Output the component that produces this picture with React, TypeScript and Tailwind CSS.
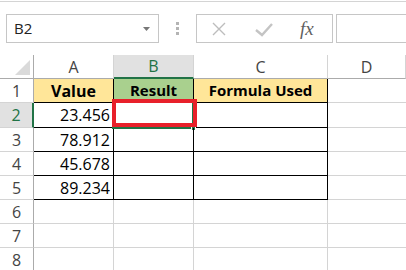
import React from 'react';

const font = { fontFamily: '"Open Sans", "Liberation Sans", sans-serif' };

type Row = { n: number; a: string; h: string };

const rows: Row[] = [
  { n: 1, a: 'Value', h: 'h-[24px]' },
  { n: 2, a: '23.456', h: 'h-[25px]' },
  { n: 3, a: '78.912', h: 'h-[24px]' },
  { n: 4, a: '45.678', h: 'h-[24px]' },
  { n: 5, a: '89.234', h: 'h-[24px]' },
  { n: 6, a: '', h: 'h-[24px]' },
  { n: 7, a: '', h: 'h-[24px]' },
  { n: 8, a: '', h: 'h-[24px]' },
];

function FormulaBar() {
  return (
    <div className="flex items-center h-[29px] mt-[12px]">
      <div className="ml-[6px] w-[153px] h-full border border-[#c6c6c6] flex items-center justify-between pl-[7px] pr-[8px]">
        <span className="text-[15px] text-[#222]">B2</span>
        <svg width="7" height="4" viewBox="0 0 7 4">
          <polygon points="0,0 7,0 3.5,4" fill="#777" />
        </svg>
      </div>
      <div className="w-[37px] flex flex-col items-center gap-[2px]">
        <div className="w-[3px] h-[3px] bg-[#b4b4b4]" />
        <div className="w-[3px] h-[3px] bg-[#b4b4b4]" />
        <div className="w-[3px] h-[3px] bg-[#b4b4b4]" />
      </div>
      <div className="w-[137px] h-full border border-[#c6c6c6] flex items-center">
        <svg width="16" height="16" viewBox="0 0 16 16" className="ml-[14px]">
          <path d="M2 2 L14 14 M14 2 L2 14" stroke="#bdbdbd" strokeWidth="1.4" fill="none" />
        </svg>
        <svg width="18" height="14" viewBox="0 0 18 14" className="ml-[28px] mt-[2px]">
          <path d="M1 7 L7 12 L17 1" stroke="#c4c4c4" strokeWidth="2.4" fill="none" />
        </svg>
        <span
          className="ml-[27px] text-[19px] italic text-[#5f5f5f] leading-none"
          style={{ fontFamily: '"Liberation Serif", serif' }}
        >
          fx
        </span>
      </div>
      <div className="ml-[3px] flex-1 h-full border border-[#c6c6c6] border-r-0" />
    </div>
  );
}

export default function App() {
  const line = 'border-[#d4d4d4]';
  return (
    <div className="w-[406px] h-[270px] overflow-hidden bg-white" style={font}>
      <div className="h-px mt-px bg-[#d4d4d4]" />
      <FormulaBar />
      <div className="mt-[12px] grid grid-cols-[34px_80px_80px_134px_1fr]">
        {/* column headers */}
        <div className="h-[24px] border-r border-b border-[#ababab] flex items-end justify-end pr-[3px] pb-[3px]">
          <svg width="15" height="15" viewBox="0 0 15 15">
            <polygon points="15,0 15,15 0,15" fill="#dadada" />
          </svg>
        </div>
        {['A', 'B', 'C', 'D'].map((c) => (
          <div
            key={c}
            className={`h-[24px] flex items-center justify-center text-[16px] border-r ${line} ${
              c === 'B'
                ? 'bg-[#e1e1e1] text-[#217346] border-b-2 border-b-[#217346]'
                : 'text-[#444] border-b border-b-[#ababab]'
            }`}
          >
            {c}
          </div>
        ))}

        {rows.map((r) => {
          const inTable = r.n <= 5;
          const edge = inTable ? 'border-black' : line;
          const head = r.n === 1;
          return (
            <React.Fragment key={r.n}>
              <div
                className={`${r.h} flex items-center justify-center text-[16px] border-b ${line} ${
                  r.n === 2
                    ? 'bg-[#e1e1e1] text-[#217346] border-r-2 border-r-[#217346]'
                    : 'text-[#444] border-r border-r-[#ababab]'
                }`}
              >
                {r.n}
              </div>
              <div
                className={`${r.h} border-r border-b ${edge} flex items-center text-[16px] text-black ${
                  head ? 'bg-[#ffe699] justify-center font-bold text-[15px]' : 'justify-end pr-[3px]'
                }`}
              >
                {r.a}
              </div>
              <div
                className={`${r.h} relative border-r border-b ${edge} flex items-center justify-center ${
                  head ? 'bg-[#a9d08e] font-bold text-[15px]' : ''
                }`}
              >
                {head ? 'Result' : ''}
                {r.n === 2 && (
                  <>
                    <div className="absolute left-[-2px] top-[-2px] w-[82px] h-[28px] border-2 border-[#217346]" />
                    <div className="absolute left-[77px] top-[23px] w-[5px] h-[5px] bg-[#217346] border border-white" />
                    <div className="absolute left-[-2px] top-[-4px] w-[85px] h-[28px] border-4 border-[#e8202a]" />
                  </>
                )}
              </div>
              <div
                className={`${r.h} border-r border-b ${edge} flex items-center justify-center ${
                  head ? 'bg-[#ffe699] font-bold text-[15px]' : ''
                }`}
              >
                {head ? 'Formula Used' : ''}
              </div>
              <div className={`${r.h} border-b ${line}`} />
            </React.Fragment>
          );
        })}
      </div>
    </div>
  );
}
